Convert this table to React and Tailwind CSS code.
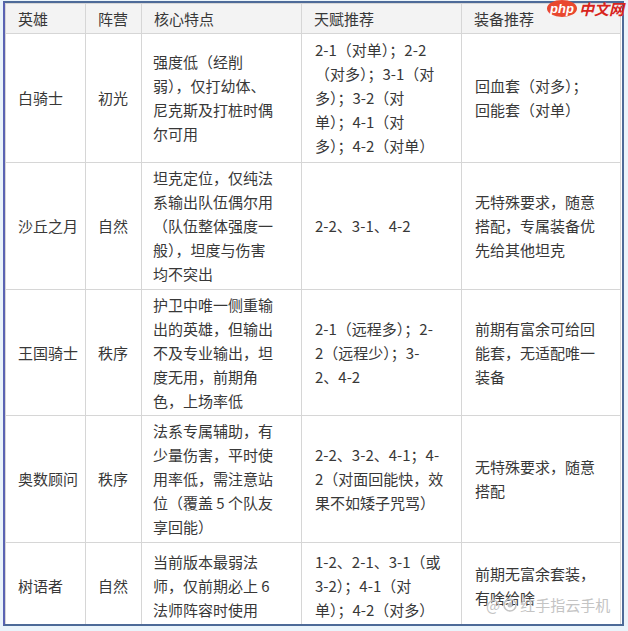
import React from 'react'

const rows = [
  {
    h: 'h-[129px]',
    name: '白骑士',
    camp: '初光',
    core: ['强度低（经削', '弱），仅打幼体、', '尼克斯及打桩时偶', '尔可用'],
    talent: ['2-1（对单）；2-2', '（对多）；3-1（对', '多）；3-2（对', '单）；4-1（对', '多）；4-2（对单）'],
    gear: ['回血套（对多）；', '回能套（对单）'],
  },
  {
    h: 'h-[127px]',
    name: '沙丘之月',
    camp: '自然',
    core: ['坦克定位，仅纯法', '系输出队伍偶尔用', '（队伍整体强度一', '般），坦度与伤害', '均不突出'],
    talent: ['2-2、3-1、4-2'],
    gear: ['无特殊要求，随意', '搭配，专属装备优', '先给其他坦克'],
  },
  {
    h: 'h-[126px]',
    name: '王国骑士',
    camp: '秩序',
    core: ['护卫中唯一侧重输', '出的英雄，但输出', '不及专业输出，坦', '度无用，前期角', '色，上场率低'],
    talent: ['2-1（远程多）；2-', '2（远程少）；3-', '2、4-2'],
    gear: ['前期有富余可给回', '能套，无适配唯一', '装备'],
  },
  {
    h: 'h-[127px]',
    name: '奥数顾问',
    camp: '秩序',
    core: ['法系专属辅助，有', '少量伤害，平时使', '用率低，需注意站', '位（覆盖 5 个队友', '享回能）'],
    talent: ['2-2、3-2、4-1；4-', '2（对面回能快，效', '果不如矮子咒骂）'],
    gear: ['无特殊要求，随意', '搭配'],
  },
  {
    h: 'h-[86px]',
    name: '树语者',
    camp: '自然',
    core: ['当前版本最弱法', '师，仅前期必上 6', '法师阵容时使用'],
    talent: ['1-2、2-1、3-1（或', '3-2）；4-1（对', '单）；4-2（对多）'],
    gear: ['前期无富余套装，', '有啥给啥'],
  },
]

function Cell({ lines, className = '' }) {
  return (
    <div className={['flex flex-col justify-center border-r border-b border-[#d6d6d6] pl-3 pr-1', className].join(' ')}>
      {lines.map((l, i) => (
        <span key={i} className="whitespace-nowrap leading-[24px]">{l}</span>
      ))}
    </div>
  )
}

export default function App() {
  return (
    <div className="relative h-[631px] w-[628px] overflow-hidden bg-[#eaf4fb]">
      <div className="ml-[3px] mt-px h-[625px] w-[621px] overflow-hidden border-2 border-[#4d6a98] border-l-[#5a63b3] bg-white">
        <div
          className="grid grid-cols-[80px_56px_160px_160px_159px] border-t border-l border-[#d6d6d6] text-[15px] text-[#383838]"
          style={{ fontFamily: '"Microsoft YaHei", "Noto Sans CJK SC", sans-serif' }}
        >
          {['英雄', '阵营', '核心特点', '天赋推荐', '装备推荐'].map((t) => (
            <Cell key={t} lines={[t]} className="h-[30px] bg-[#f3f3f3]" />
          ))}
          {rows.map((r) => (
            <React.Fragment key={r.name}>
              <Cell lines={[r.name]} className={r.h} />
              <Cell lines={[r.camp]} className={r.h} />
              <Cell lines={r.core} className={[r.h, 'pl-[11px]'].join(' ')} />
              <Cell lines={r.talent} className={[r.h, 'pl-[13px]'].join(' ')} />
              <Cell lines={r.gear} className={[r.h, 'pl-[13px]'].join(' ')} />
            </React.Fragment>
          ))}
        </div>
      </div>

      {/* site logo, top right */}
      <div className="absolute left-[547px] top-0 flex items-center gap-[2px]">
        <span className="flex h-[17px] w-[30px] items-center justify-center rounded-[50%] bg-[#e9482f] text-[13px] font-bold italic leading-none text-white" style={{ fontFamily: '"Liberation Sans", sans-serif' }}>
          php
        </span>
        <span className="text-[15px] font-bold italic leading-none text-[#d8241c]" style={{ fontFamily: '"Noto Sans CJK SC", sans-serif' }}>
          中文网
        </span>
      </div>

      {/* watermark, bottom right */}
      <div
        className="absolute left-[486px] top-[597px] flex items-center gap-[3px] text-[15px] leading-none text-[#c4c4c4] [text-shadow:0_0_2px_#fff]"
        style={{ fontFamily: '"Noto Sans CJK SC", sans-serif' }}
      >
        <span>@</span>
        <svg width="14" height="14" viewBox="0 0 14 14">
          <circle cx="7" cy="7" r="6" fill="none" stroke="#c4c4c4" strokeWidth="1.6" />
          <circle cx="7" cy="7" r="2.5" fill="#c4c4c4" />
        </svg>
        <span>红手指云手机</span>
      </div>
    </div>
  )
}
